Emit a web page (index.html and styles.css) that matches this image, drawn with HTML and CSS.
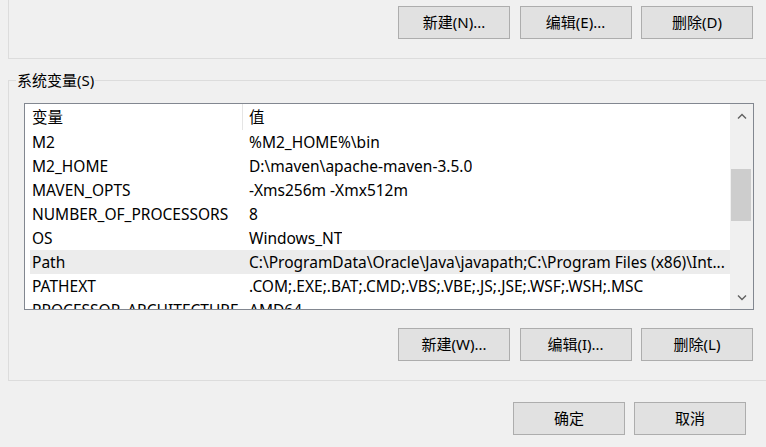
FILE: index.html
```html
<!DOCTYPE html>
<html lang="zh-CN">
<head>
<meta charset="utf-8">
<title>环境变量</title>
<link rel="stylesheet" href="styles.css">
</head>
<body>
<div class="page">
  <div class="top-group">
    <div class="btn-row">
      <button class="btn">新建(N)...</button>
      <button class="btn">编辑(E)...</button>
      <button class="btn">删除(D)</button>
    </div>
  </div>

  <fieldset class="group">
    <legend class="legend">系统变量(S)</legend>
    <div class="list">
      <div class="list-main">
        <div class="list-head">
          <div class="hcell hname">变量</div>
          <div class="hdiv"></div>
          <div class="hcell hval">值</div>
        </div>
        <div class="rows">
          <div class="row"><div class="cname">M2</div><div class="cval">%M2_HOME%\bin</div></div>
          <div class="row"><div class="cname">M2_HOME</div><div class="cval">D:\maven\apache-maven-3.5.0</div></div>
          <div class="row"><div class="cname">MAVEN_OPTS</div><div class="cval">-Xms256m -Xmx512m</div></div>
          <div class="row"><div class="cname">NUMBER_OF_PROCESSORS</div><div class="cval">8</div></div>
          <div class="row"><div class="cname">OS</div><div class="cval">Windows_NT</div></div>
          <div class="row sel"><div class="cname">Path</div><div class="cval">C:\ProgramData\Oracle\Java\javapath;C:\Program Files (x86)\Int...</div></div>
          <div class="row"><div class="cname">PATHEXT</div><div class="cval">.COM;.EXE;.BAT;.CMD;.VBS;.VBE;.JS;.JSE;.WSF;.WSH;.MSC</div></div>
          <div class="row"><div class="cname">PROCESSOR_ARCHITECTURE</div><div class="cval">AMD64</div></div>
        </div>
      </div>
      <div class="scrollbar">
        <div class="arrow">
          <svg width="10" height="6" viewBox="0 0 10 6"><path d="M1 5.5 L5 1.5 L9 5.5" fill="none" stroke="#606060" stroke-width="1.4"/></svg>
        </div>
        <div class="track">
          <div class="thumb"></div>
        </div>
        <div class="arrow">
          <svg width="10" height="6" viewBox="0 0 10 6"><path d="M1 0.5 L5 4.5 L9 0.5" fill="none" stroke="#606060" stroke-width="1.4"/></svg>
        </div>
      </div>
    </div>
    <div class="btn-row btn-row-2">
      <button class="btn">新建(W)...</button>
      <button class="btn">编辑(I)...</button>
      <button class="btn">删除(L)</button>
    </div>
  </fieldset>

  <div class="dialog-row">
    <button class="btn">确定</button>
    <button class="btn">取消</button>
  </div>
</div>
</body>
</html>
```

FILE: styles.css
```css
html, body {
  margin: 0;
  padding: 0;
  background: #f0f0f0;
  overflow: hidden;
}

body {
  font-family: "Noto Sans", "Noto Sans CJK SC", sans-serif;
  font-size: 15px;
  color: #000;
}

.page {
  width: 766px;
  height: 447px;
}

.top-group {
  margin-left: 8px;
  width: 800px;
  height: 58px;
  border-left: 1px solid #dcdcdc;
  border-bottom: 1px solid #dcdcdc;
  box-sizing: content-box;
}

.btn-row {
  display: flex;
  gap: 9.5px;
  padding-top: 6px;
  padding-left: 389px;
}

.btn {
  width: 112px;
  height: 33px;
  margin: 0;
  padding: 0;
  background: #e1e1e1;
  border: 1px solid #adadad;
  font-family: "Noto Sans", "Noto Sans CJK SC", sans-serif;
  font-size: 15px;
  color: #000;
  line-height: 31px;
  text-align: center;
  box-sizing: border-box;
}

.group {
  margin: 0 0 0 8px;
  margin-top: 11px;
  padding: 0 0 19px 0;
  width: 800px;
  border: 1px solid #dcdcdc;
  border-right: none;
  box-sizing: content-box;
  min-inline-size: 0;
}

.legend {
  margin-left: 7px;
  padding: 0 1px;
  line-height: 20px;
  height: 20px;
}

.list {
  margin-top: 13px;
  margin-left: 15px;
  width: 730px;
  height: 207px;
  box-sizing: border-box;
  border: 1px solid #828790;
  background: #fff;
  display: flex;
  overflow: hidden;
  font-size: 15.5px;
}

.list-main {
  width: 705px;
  overflow: hidden;
}

.list-head {
  display: flex;
  height: 26px;
  align-items: stretch;
}

.hcell {
  line-height: 26px;
  white-space: nowrap;
}

.hname {
  width: 217px;
  padding-left: 7px;
  box-sizing: border-box;
}

.hdiv {
  width: 1px;
  background: #e5e5e5;
}

.hval {
  padding-left: 6px;
}

.rows {
  padding-left: 5px;
}

.row {
  display: flex;
  height: 24px;
  line-height: 24px;
  white-space: nowrap;
}

.row.sel {
  background: #ececec;
}

.cname {
  width: 213px;
  padding-left: 2px;
  box-sizing: border-box;
  flex: none;
  overflow: hidden;
}

.cval {
  padding-left: 6px;
  overflow: hidden;
}

.scrollbar {
  width: 23px;
  background: #f0f0f0;
  display: flex;
  flex-direction: column;
}

.arrow {
  height: 23px;
  display: flex;
  align-items: center;
  justify-content: center;
  flex: none;
}

.track {
  flex: 1;
  padding-top: 42px;
  padding-left: 1px;
}

.thumb {
  width: 20px;
  height: 52px;
  background: #cdcdcd;
}

.btn-row-2 {
  padding-top: 18px;
  padding-left: 389px;
}

.dialog-row {
  display: flex;
  gap: 9px;
  padding-top: 21px;
  padding-left: 513px;
}
```
